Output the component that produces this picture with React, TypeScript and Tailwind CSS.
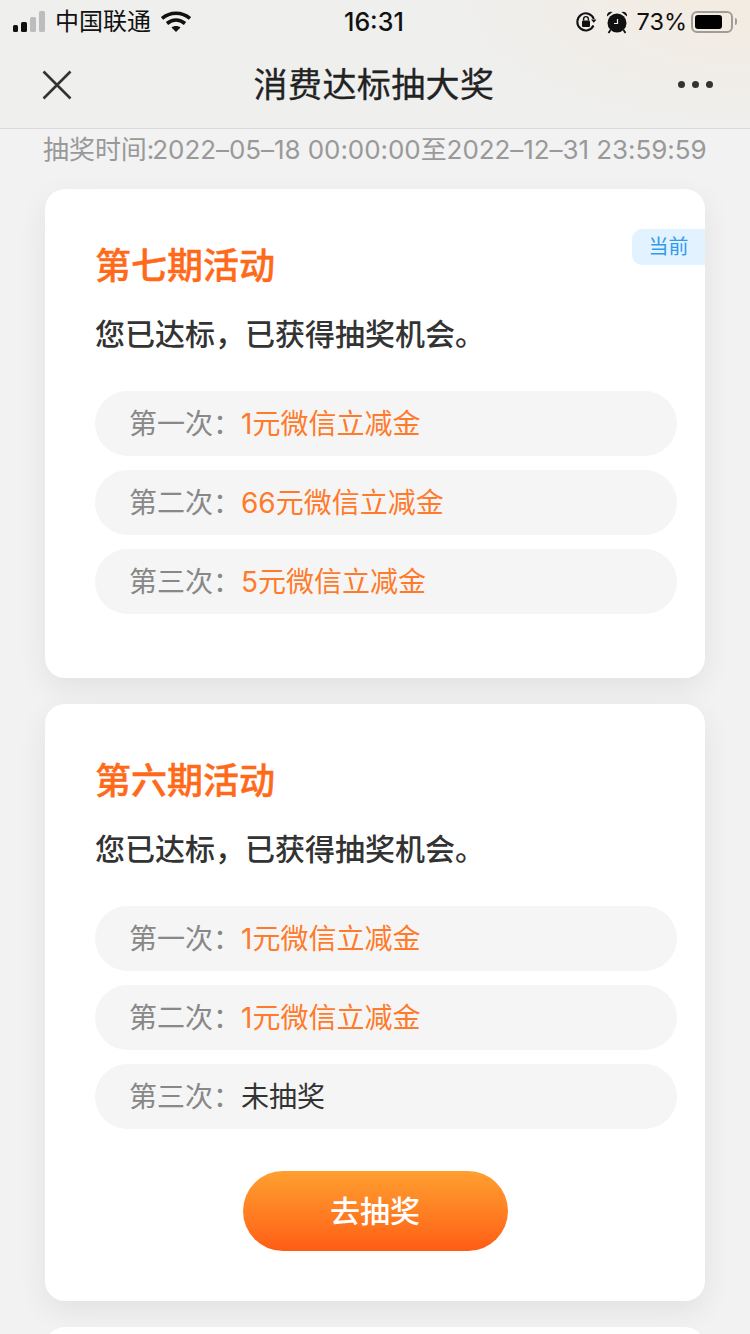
import React from 'react';

const FONT = "font-['Inter','Noto_Sans_CJK_SC',sans-serif]";

const COLON = '\uFF1A';
const COMMA = '\uFF0C';

const rounds = {
  seventh: [
    { label: `第一次${COLON}`, value: '1元微信立减金', won: true },
    { label: `第二次${COLON}`, value: '66元微信立减金', won: true },
    { label: `第三次${COLON}`, value: '5元微信立减金', won: true },
  ],
  sixth: [
    { label: `第一次${COLON}`, value: '1元微信立减金', won: true },
    { label: `第二次${COLON}`, value: '1元微信立减金', won: true },
    { label: `第三次${COLON}`, value: '未抽奖', won: false },
  ],
};

const Signal = () => (
  <svg width="34" height="22" viewBox="0 0 34 22" className="shrink-0">
    <rect x="0" y="14" width="5" height="7" rx="1.5" fill="#111" />
    <rect x="8" y="11" width="6" height="10" rx="1.5" fill="#111" />
    <rect x="17" y="6" width="6" height="15" rx="1.5" fill="#bdbdbd" />
    <rect x="26" y="0" width="6" height="21" rx="1.5" fill="#bdbdbd" />
  </svg>
);

const Wifi = () => (
  <svg width="30" height="22" viewBox="0 0 30 22" className="shrink-0">
    <path d="M1 7.5C9 0.5 21 0.5 29 7.5" fill="none" stroke="#111" strokeWidth="3.6" />
    <path d="M6 12.5C11.5 8 18.5 8 24 12.5" fill="none" stroke="#111" strokeWidth="3.6" />
    <path d="M10.5 16.5C13 14.5 17 14.5 19.5 16.5L15 21Z" fill="#111" />
  </svg>
);

const RotationLock = () => (
  <svg width="22" height="22" viewBox="0 0 22 22" className="shrink-0">
    <path d="M18.5 14.5A8.5 8.5 0 1 1 18.8 8" fill="none" stroke="#111" strokeWidth="2" />
    <path d="M16 8.5h5.5l-2.7 3.2Z" fill="#111" />
    <rect x="7" y="9.5" width="8" height="6.5" rx="1" fill="#111" />
    <path d="M8.6 9.5V8a2.4 2.4 0 0 1 4.8 0v1.5" fill="none" stroke="#111" strokeWidth="1.4" />
  </svg>
);

const Alarm = () => (
  <svg width="22" height="24" viewBox="0 0 22 24" className="shrink-0">
    <circle cx="11" cy="13" r="9.5" fill="#111" />
    <path d="M1 6.5A4 4 0 0 1 6.5 2Z" fill="#111" />
    <path d="M21 6.5A4 4 0 0 0 15.5 2Z" fill="#111" />
    <path d="M4.5 20l-2 3M17.5 20l2 3" stroke="#111" strokeWidth="1.8" />
    <path d="M11.5 9v4.5H8" fill="none" stroke="#eee" strokeWidth="1.2" />
  </svg>
);

const Battery = () => (
  <div className="flex items-center gap-[2px]">
    <div className="flex h-[22px] w-[42px] items-center rounded-[6px] border-2 border-[#a09c98] p-[2px]">
      <div className="h-full w-[27px] rounded-[3px] bg-black" />
    </div>
    <div className="h-[7px] w-[2px] rounded-r-full bg-[#a09c98]" />
  </div>
);

const StatusBar = () => (
  <div className="relative flex h-[41px] items-center justify-between pl-[13px] pr-[13px] pt-[2px] text-[#111]">
    <div className="flex items-center">
      <Signal />
      <span className="ml-[8px] text-[24px] leading-none">中国联通</span>
      <span className="ml-[10px]"><Wifi /></span>
    </div>
    <span className="absolute left-[344px] top-[8px] text-[25px] font-medium leading-[28px]">16:31</span>
    <div className="flex items-center">
      <RotationLock />
      <span className="ml-[9px]"><Alarm /></span>
      <span className="ml-[9px] mr-[4px] text-[23.5px] leading-none">73%</span>
      <Battery />
    </div>
  </div>
);

const NavBar = () => (
  <div className="flex h-[88px] items-center justify-between border-b border-[#d9d9d9] pl-[42px] pr-[37px]">
    <svg width="30" height="30" viewBox="0 0 30 30">
      <path d="M1.5 1.5l27 27M28.5 1.5l-27 27" stroke="#333" strokeWidth="2.6" />
    </svg>
    <h1 className="-ml-[2px] text-[34px] font-normal leading-none tracking-[0.4px] text-[#222] [-webkit-text-stroke:0.3px_#222]">消费达标抽大奖</h1>
    <div className="flex gap-[7px]">
      <span className="h-[7px] w-[7px] rounded-full bg-[#333]" />
      <span className="h-[7px] w-[7px] rounded-full bg-[#333]" />
      <span className="h-[7px] w-[7px] rounded-full bg-[#333]" />
    </div>
  </div>
);

const Row = ({ label, value, won }: { label: string; value: string; won: boolean }) => (
  <div className="flex h-[65px] items-center rounded-full bg-[#f5f5f5] pl-[35px] text-[28px] leading-none">
    <span className="-ml-px w-[112px] text-[#888]">{label}</span>
    <span className={won ? 'text-[#ff7a2a]' : 'text-[#333]'}>{value}</span>
  </div>
);

const ActivityCard = ({
  title,
  items,
  current,
  children,
}: {
  title: string;
  items: { label: string; value: string; won: boolean }[];
  current?: boolean;
  children?: React.ReactNode;
}) => (
  <section className="relative rounded-[20px] bg-white pb-[64px] pl-[50px] pr-[28px] pt-[55px] shadow-[0_10px_30px_rgba(0,0,0,0.07)]">
    {current && (
      <span className="absolute right-0 top-[40px] flex h-[36px] w-[73px] items-center justify-center rounded-l-[10px] bg-[#e2f2ff] text-[20px] leading-none text-[#2f9bef]">
        当前
      </span>
    )}
    <h2 className="text-[36px] font-medium leading-[44px] text-[#ff6a1a] [-webkit-text-stroke:0.4px_#ff6a1a]">{title}</h2>
    <p className="mt-[28px] text-[30px] font-medium leading-[36px] text-[#333]">您已达标{COMMA}已获得抽奖机会。</p>
    <div className="mt-[39px] flex flex-col gap-[14px]">
      {items.map(item => (
        <Row key={item.label} {...item} />
      ))}
    </div>
    {children}
  </section>
);

export default function App() {
  return (
    <div className={`${FONT} h-[1334px] w-[750px] overflow-hidden bg-[#f2f2f2]`}>
      <header className="bg-[radial-gradient(ellipse_300px_130px_at_100%_0%,#f3ebe0_0,#efefee_100%)]">
        <StatusBar />
        <NavBar />
      </header>

      <p className="mt-[5px] whitespace-nowrap pl-[43px] text-[26px] leading-[32px] tracking-[-0.06px] text-[#999]">
        抽奖时间<span className="tracking-[-2px]">:</span>2022–05–18 00:00:00至2022–12–31 23:59:59
      </p>

      <div className="mx-[45px] mt-[23px] flex flex-col gap-[26px]">
        <ActivityCard title="第七期活动" items={rounds.seventh} current />
        <ActivityCard title="第六期活动" items={rounds.sixth}>
          <button className="mx-auto -mb-[14px] mt-[42px] block h-[80px] w-[265px] -translate-x-[11px] rounded-full bg-gradient-to-b from-[#ff9f30] to-[#ff5c14] text-[30px] font-medium text-white">
            去抽奖
          </button>
        </ActivityCard>
        <section className="h-[40px] rounded-[20px] bg-white" />
      </div>
    </div>
  );
}
